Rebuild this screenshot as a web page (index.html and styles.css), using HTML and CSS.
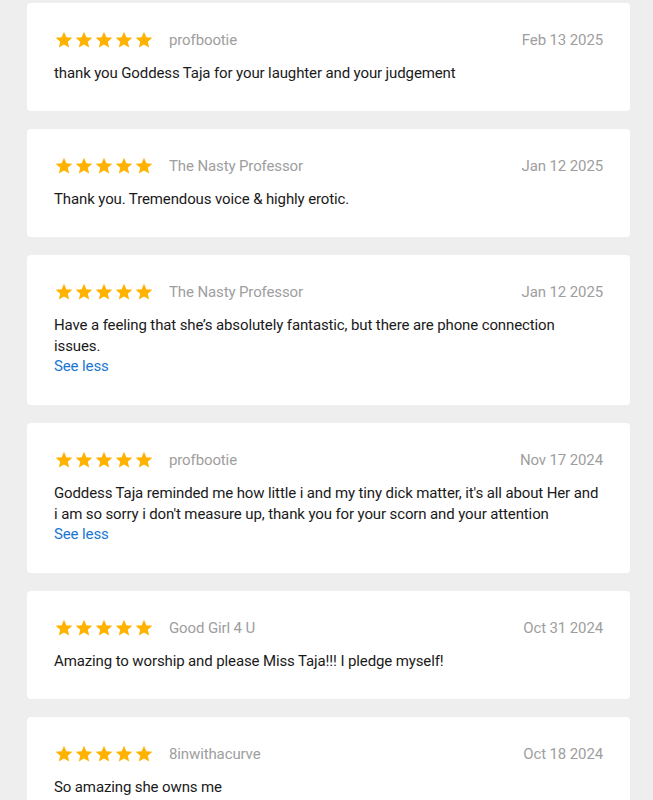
FILE: index.html
```html
<!DOCTYPE html>
<html>
<head>
<meta charset="utf-8">
<link rel="stylesheet" href="styles.css">
</head>
<body>
<svg width="0" height="0" class="defs">
  <defs>
    <symbol id="star" viewBox="0 0 24 24"><path d="M12 17.27L18.18 21l-1.64-7.03L22 9.24l-7.19-.61L12 2 9.19 8.63 2 9.24l5.46 4.73L5.82 21z"/></symbol>
  </defs>
</svg>
<div class="list">
  <div class="card">
    <div class="head">
      <div class="stars"><svg><use href="#star"/></svg><svg><use href="#star"/></svg><svg><use href="#star"/></svg><svg><use href="#star"/></svg><svg><use href="#star"/></svg></div>
      <span class="name">profbootie</span>
      <span class="date">Feb 13 2025</span>
    </div>
    <p class="text">thank you Goddess Taja for your laughter and your judgement</p>
  </div>
  <div class="card">
    <div class="head">
      <div class="stars"><svg><use href="#star"/></svg><svg><use href="#star"/></svg><svg><use href="#star"/></svg><svg><use href="#star"/></svg><svg><use href="#star"/></svg></div>
      <span class="name">The Nasty Professor</span>
      <span class="date">Jan 12 2025</span>
    </div>
    <p class="text">Thank you. Tremendous voice &amp; highly erotic.</p>
  </div>
  <div class="card">
    <div class="head">
      <div class="stars"><svg><use href="#star"/></svg><svg><use href="#star"/></svg><svg><use href="#star"/></svg><svg><use href="#star"/></svg><svg><use href="#star"/></svg></div>
      <span class="name">The Nasty Professor</span>
      <span class="date">Jan 12 2025</span>
    </div>
    <p class="text">Have a feeling that she’s absolutely fantastic, but there are phone connection issues.</p>
    <a class="more" href="#">See less</a>
  </div>
  <div class="card">
    <div class="head">
      <div class="stars"><svg><use href="#star"/></svg><svg><use href="#star"/></svg><svg><use href="#star"/></svg><svg><use href="#star"/></svg><svg><use href="#star"/></svg></div>
      <span class="name">profbootie</span>
      <span class="date">Nov 17 2024</span>
    </div>
    <p class="text">Goddess Taja reminded me how little i and my tiny dick matter, it's all about Her and i am so sorry i don't measure up, thank you for your scorn and your attention</p>
    <a class="more" href="#">See less</a>
  </div>
  <div class="card">
    <div class="head">
      <div class="stars"><svg><use href="#star"/></svg><svg><use href="#star"/></svg><svg><use href="#star"/></svg><svg><use href="#star"/></svg><svg><use href="#star"/></svg></div>
      <span class="name">Good Girl 4 U</span>
      <span class="date">Oct 31 2024</span>
    </div>
    <p class="text">Amazing to worship and please Miss Taja!!! I pledge myself!</p>
  </div>
  <div class="card">
    <div class="head">
      <div class="stars"><svg><use href="#star"/></svg><svg><use href="#star"/></svg><svg><use href="#star"/></svg><svg><use href="#star"/></svg><svg><use href="#star"/></svg></div>
      <span class="name">8inwithacurve</span>
      <span class="date">Oct 18 2024</span>
    </div>
    <p class="text">So amazing she owns me</p>
  </div>
</div>
</body>
</html>
```
FILE: styles.css
```css
html, body {
  margin: 0;
  padding: 0;
  background: #eeeeee;
  font-family: Roboto, "Liberation Sans", sans-serif;
}
.defs { position: absolute; }
.list {
  display: flex;
  flex-direction: column;
  gap: 18px;
  padding: 3px 23px 0 27px;
}
.card {
  background: #ffffff;
  border-radius: 4px;
  padding: 27px 27px 28px 27px;
  display: flex;
  flex-direction: column;
  letter-spacing: -0.12px;
}
.head {
  display: flex;
  align-items: center;
  height: 20px;
  margin-bottom: 12px;
}
.stars {
  display: flex;
}
.stars svg {
  width: 20px;
  height: 20px;
  fill: #ffb300;
  display: block;
}
.name {
  margin-left: 15px;
  color: #9e9e9e;
  font-size: 15px;
}
.date {
  margin-left: auto;
  color: #9e9e9e;
  font-size: 15px;
}
.text {
  margin: 0;
  font-size: 15px;
  line-height: 21px;
  color: #1a1a1a;
  padding-top: 1px;
  margin-bottom: -1px;
}
.more {
  font-size: 15px;
  line-height: 21px;
  color: #1976d2;
  text-decoration: none;
  align-self: flex-start;
}
```
